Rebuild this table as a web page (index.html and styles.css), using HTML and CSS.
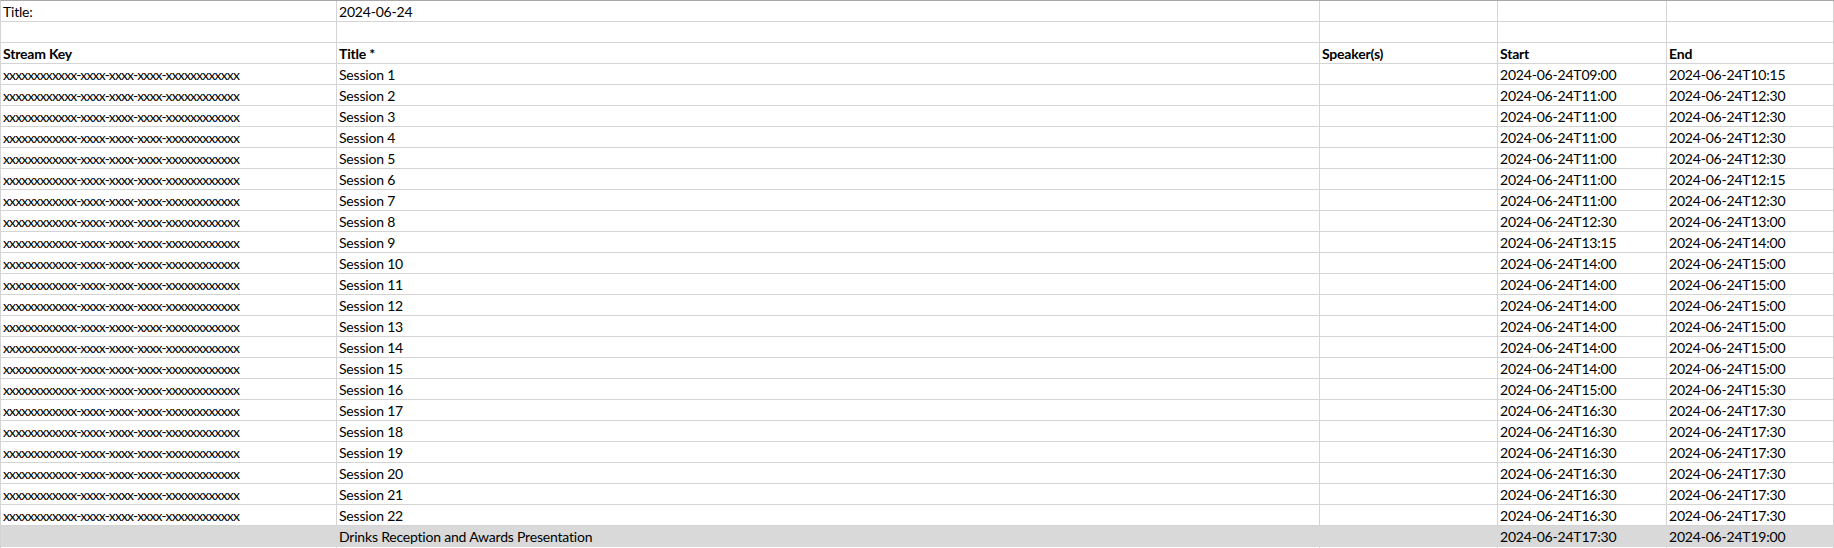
FILE: index.html
```html
<!DOCTYPE html>
<html>
<head>
<meta charset="utf-8">
<link rel="stylesheet" href="styles.css">
</head>
<body>
<div class="sheet" id="sheet">
  <div class="c">Title:</div><div class="c">2024-06-24</div><div class="c"></div><div class="c"></div><div class="c"></div>
  <div class="c"></div><div class="c"></div><div class="c"></div><div class="c"></div><div class="c"></div>
  <div class="c b">Stream Key</div><div class="c b">Title *</div><div class="c b">Speaker(s)</div><div class="c b">Start</div><div class="c b">End</div>
</div>
<script>
const rows = [
 ["09:00","10:15"],["11:00","12:30"],["11:00","12:30"],["11:00","12:30"],["11:00","12:30"],
 ["11:00","12:15"],["11:00","12:30"],["12:30","13:00"],["13:15","14:00"],["14:00","15:00"],
 ["14:00","15:00"],["14:00","15:00"],["14:00","15:00"],["14:00","15:00"],["14:00","15:00"],
 ["15:00","15:30"],["16:30","17:30"],["16:30","17:30"],["16:30","17:30"],["16:30","17:30"],
 ["16:30","17:30"],["16:30","17:30"]
];
const s = document.getElementById('sheet');
let html = '';
rows.forEach((r,i)=>{
  html += '<div class="c key">xxxxxxxxxxxx-xxxx-xxxx-xxxx-xxxxxxxxxxxx</div><div class="c">Session '+(i+1)+'</div><div class="c"></div><div class="c">2024-06-24T'+r[0]+'</div><div class="c">2024-06-24T'+r[1]+'</div>';
});
html += '<div class="c g"></div><div class="c g">Drinks Reception and Awards Presentation</div><div class="c g"></div><div class="c g">2024-06-24T17:30</div><div class="c g">2024-06-24T19:00</div>';
html += '<div class="c"></div><div class="c"></div><div class="c"></div><div class="c"></div><div class="c"></div>';
s.insertAdjacentHTML('beforeend', html);
</script>
</body>
</html>
```
FILE: styles.css
```css
html, body {
  margin: 0;
  padding: 0;
  background: #fff;
}
body {
  width: 1834px;
  height: 548px;
  overflow: hidden;
}
.sheet {
  display: grid;
  grid-template-columns: 336px 983px 178px 169px 1fr;
  grid-auto-rows: 21px;
  border-top: 1px solid #a8a8a8;
  border-left: 1px solid #d4d4d4;
  font-family: Lato, "Open Sans", sans-serif;
  font-size: 14px;
  letter-spacing: -0.2px;
  color: #000;
}
.c {
  box-sizing: border-box;
  border-right: 1px solid #d4d4d4;
  border-bottom: 1px solid #d4d4d4;
  padding: 2px 0 0 2px;
  line-height: 17px;
  white-space: nowrap;
  overflow: hidden;
}
.key {
  letter-spacing: -0.85px;
}
.b {
  font-weight: bold;
}
.g {
  background: #d9d9d9;
  border-right-color: #d9d9d9;
  border-bottom-color: #d9d9d9;
}
```
